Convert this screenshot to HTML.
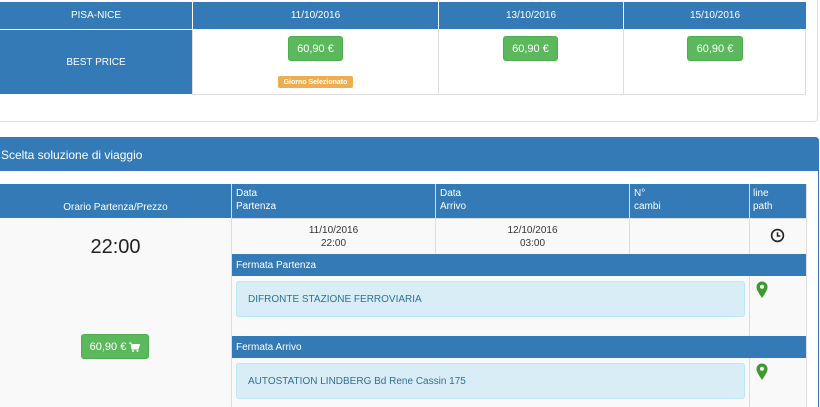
<!DOCTYPE html>
<html style="width:820px;height:407px;overflow:hidden"><head><meta charset="utf-8"><style>
*{box-sizing:border-box;margin:0;padding:0}
body{width:820px;height:407px;overflow:hidden;background:#fff;font-family:"Liberation Sans",Arial,sans-serif;font-size:10px;color:#333;position:relative}
.a{position:absolute}
.blue{background:#337ab7;color:#fff}
.btn{background:#5cb85c;color:#fff;border:1px solid #4cae4c;border-radius:3px;font-size:11px;text-align:center}
.c{display:flex;align-items:center;justify-content:center}
.alert{background:#d9edf7;border:1px solid #bce8f1;border-radius:3px;color:#31708f;font-size:10px;padding-left:11px;display:flex;align-items:center}
</style></head><body>
<div class="a" style="left:0;top:0;width:818px;height:122px;border:1px solid #e3dede;border-left:none;border-top:none;border-radius:0 0 4px 0"></div>
<div class="a blue c" style="left:0;top:2px;width:192px;height:27px">PISA-NICE</div>
<div class="a blue c" style="left:193px;top:2px;width:245px;height:27px">11/10/2016</div>
<div class="a blue c" style="left:439px;top:2px;width:184px;height:27px">13/10/2016</div>
<div class="a blue c" style="left:624px;top:2px;width:182px;height:27px">15/10/2016</div>
<div class="a blue c" style="left:0;top:30px;width:192px;height:64px">BEST PRICE</div>
<div class="a" style="left:192px;top:29px;width:614px;height:66px;border:1px solid #ddd;border-top:none"></div>
<div class="a" style="left:438px;top:29px;width:1px;height:66px;background:#ddd"></div>
<div class="a" style="left:623px;top:29px;width:1px;height:66px;background:#ddd"></div>
<div class="a btn c" style="left:288px;top:36px;width:55px;height:25px">60,90 €</div>
<div class="a btn c" style="left:503px;top:36px;width:55px;height:25px">60,90 €</div>
<div class="a btn c" style="left:687px;top:36px;width:56px;height:25px">60,90 €</div>
<div class="a c" style="left:278px;top:76px;width:75px;height:12px;background:#f0ad4e;color:#fff;font-size:7px;font-weight:bold;border-radius:2px">Giorno Selezionato</div>
<div class="a" style="left:0;top:137px;width:819px;height:275px;border:1px solid #337ab7;border-left:none;border-radius:0 4px 0 0;background:#fff"></div>
<div class="a blue" style="left:0;top:137px;width:819px;height:34px;border-radius:0 4px 0 0;font-size:12px;padding:11px 0 0 1px">Scelta soluzione di viaggio</div>
<div class="a" style="left:0;top:218px;width:806px;height:189px;background:#f9f9f9"></div>
<div class="a blue" style="left:0;top:184px;width:806px;height:34px"></div>
<div class="a c" style="left:0;top:200px;width:231px;height:14px;color:#fff">Orario Partenza/Prezzo</div>
<div class="a" style="left:231px;top:184px;width:1px;height:223px;background:#ddd"></div>
<div class="a" style="left:435px;top:184px;width:1px;height:70px;background:#ddd"></div>
<div class="a" style="left:629px;top:184px;width:1px;height:70px;background:#ddd"></div>
<div class="a" style="left:749px;top:184px;width:1px;height:223px;background:#ddd"></div>
<div class="a" style="left:806px;top:184px;width:1px;height:223px;background:#ddd"></div>
<div class="a" style="left:236px;top:187px;color:#fff;line-height:13px">Data<br>Partenza</div>
<div class="a" style="left:440px;top:187px;color:#fff;line-height:13px">Data<br>Arrivo</div>
<div class="a" style="left:634px;top:187px;color:#fff;line-height:13px">N°<br>cambi</div>
<div class="a" style="left:753px;top:187px;color:#fff;line-height:13px">line<br>path</div>
<div class="a" style="left:232px;top:218px;width:574px;height:1px;background:#ddd"></div>
<div class="a" style="left:232px;top:224px;width:203px;text-align:center;line-height:13px">11/10/2016<br>22:00</div>
<div class="a" style="left:436px;top:224px;width:193px;text-align:center;line-height:13px">12/10/2016<br>03:00</div>
<svg class="a" style="left:770px;top:228px" width="15" height="15" viewBox="0 0 16 16"><circle cx="8" cy="8" r="6.3" fill="none" stroke="#222" stroke-width="1.7"/><path d="M8 4.5V8.5H11" fill="none" stroke="#222" stroke-width="1.6"/></svg>
<div class="a" style="left:0;top:236px;width:231px;text-align:center;font-size:20px;color:#222">22:00</div>
<div class="a btn c" style="left:81px;top:334px;width:68px;height:25px">60,90 €&nbsp;<svg width="11" height="10" viewBox="0 0 11 10"><path d="M0 1H2L3 7H9L10.5 2.5H2.5" fill="#fff" stroke="#fff" stroke-width="1"/><circle cx="4" cy="9" r="1" fill="#fff"/><circle cx="8.5" cy="9" r="1" fill="#fff"/></svg></div>
<div class="a blue" style="left:232px;top:254px;width:574px;height:22px;padding:6px 0 0 4px">Fermata Partenza</div>
<div class="a alert" style="left:236px;top:281px;width:509px;height:36px">DIFRONTE STAZIONE FERROVIARIA</div>
<div class="a blue" style="left:232px;top:336px;width:574px;height:22px;padding:6px 0 0 4px">Fermata Arrivo</div>
<div class="a alert" style="left:236px;top:363px;width:509px;height:36px">AUTOSTATION LINDBERG Bd Rene Cassin 175</div>
<svg class="a" style="left:756px;top:281px" width="12" height="17" viewBox="0 0 12 17"><path d="M6 17C2 11 0.5 8.5 0.5 6A5.5 5.5 0 0 1 11.5 6C11.5 8.5 10 11 6 17Z" fill="#3c9a2e"/><circle cx="6" cy="5.8" r="2" fill="#f9f9f9"/></svg>
<svg class="a" style="left:756px;top:363px" width="12" height="17" viewBox="0 0 12 17"><path d="M6 17C2 11 0.5 8.5 0.5 6A5.5 5.5 0 0 1 11.5 6C11.5 8.5 10 11 6 17Z" fill="#3c9a2e"/><circle cx="6" cy="5.8" r="2" fill="#f9f9f9"/></svg>
</body></html>
